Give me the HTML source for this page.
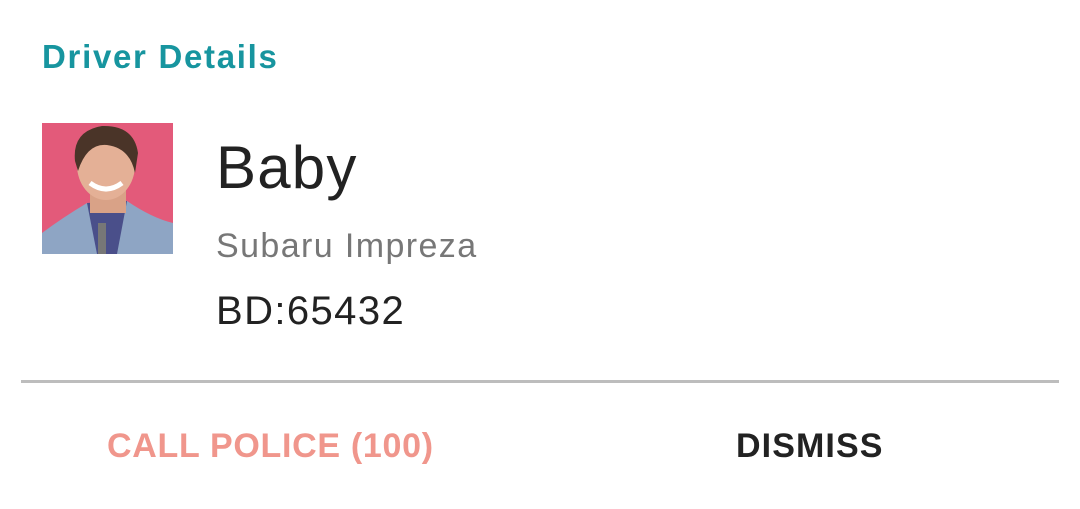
<!DOCTYPE html>
<html><head><style>
body{margin:0;width:1080px;height:509px;background:#fff;font-family:"Liberation Sans",sans-serif;position:relative;overflow:hidden}
.t{position:absolute;white-space:nowrap}
</style></head><body>
<div class="t" style="left:42px;top:38px;font-size:33px;font-weight:bold;color:#17959f;letter-spacing:1.7px">Driver Details</div>
<svg style="position:absolute;left:42px;top:123px" width="131" height="131" viewBox="0 0 131 131">
<rect width="131" height="131" fill="#e35a7a"/>
<path d="M0 131 L0 110 Q20 95 45 80 L85 78 Q110 95 131 100 L131 131Z" fill="#8ea5c4"/>
<path d="M45 80 L55 131 L75 131 L85 78Z" fill="#4a4f8a"/>
<rect x="56" y="100" width="8" height="31" fill="#777"/>
<rect x="48" y="60" width="36" height="30" fill="#d9a287"/>
<ellipse cx="64" cy="42" rx="29" ry="35" fill="#e4b096"/>
<path d="M33 38 Q30 8 60 3 Q92 2 96 30 L93 50 Q88 25 65 22 Q45 20 36 48Z" fill="#4a3428"/>
<path d="M48 60 Q64 72 80 60" stroke="#fff" stroke-width="5" fill="none"/>
</svg>
<div class="t" style="left:216px;top:133px;font-size:60px;color:#222;letter-spacing:1.2px">Baby</div>
<div class="t" style="left:216px;top:227px;font-size:34px;color:#777;letter-spacing:1.4px">Subaru Impreza</div>
<div class="t" style="left:216px;top:289px;font-size:40px;color:#222;letter-spacing:1.4px">BD:65432</div>
<div style="position:absolute;left:21px;top:380px;width:1038px;height:3px;background:#bdbdbd"></div>
<div class="t" style="left:107px;top:427px;font-size:34px;font-weight:bold;color:#f0968c;letter-spacing:0.7px">CALL POLICE (100)</div>
<div class="t" style="left:736px;top:427px;font-size:34px;font-weight:bold;color:#222;letter-spacing:1.1px">DISMISS</div>
</body></html>
